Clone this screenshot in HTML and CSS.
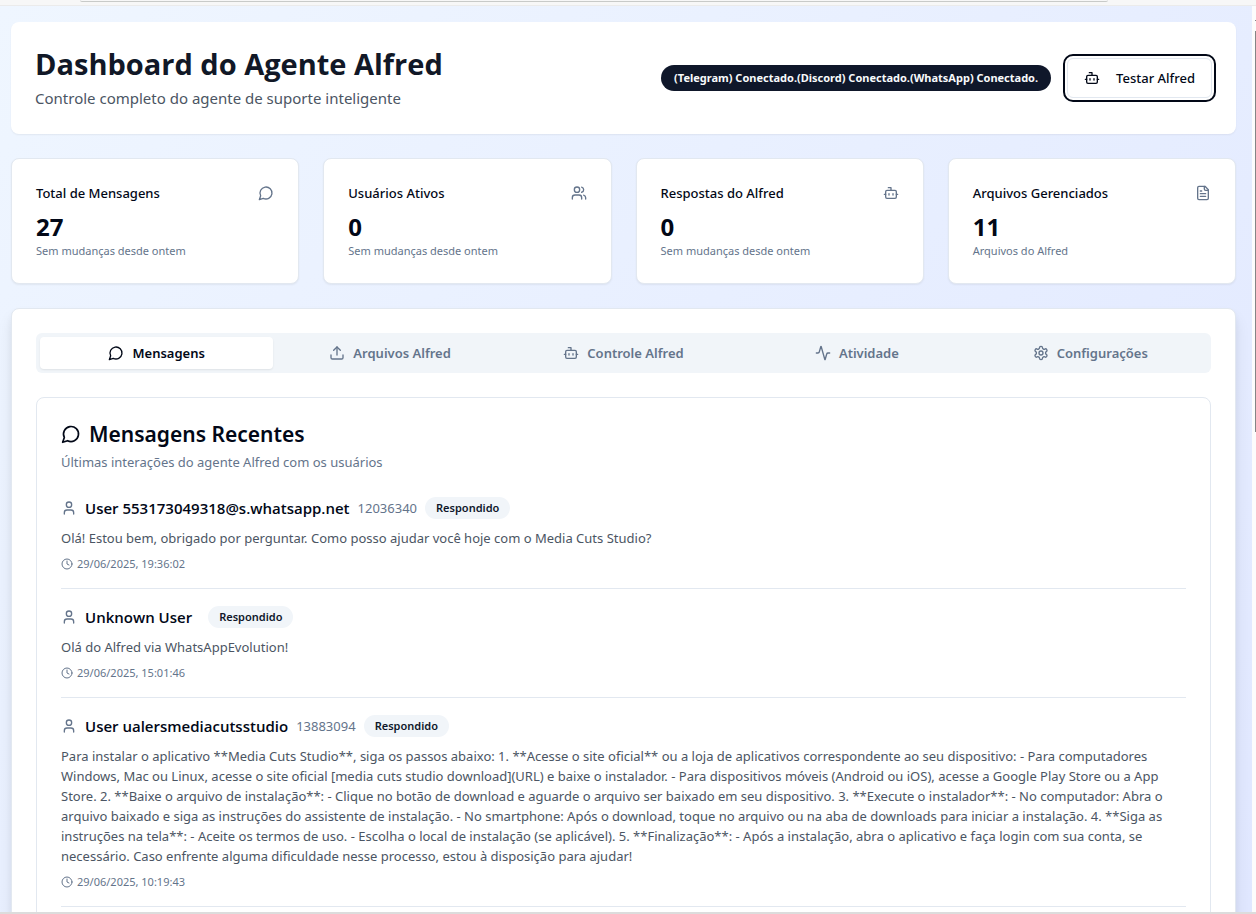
FILE: index.html
```html
<!DOCTYPE html>
<html lang="pt-BR">
<head>
<meta charset="utf-8">
<title>Dashboard do Agente Alfred</title>
<link rel="stylesheet" href="styles.css">
</head>
<body>
<svg class="sprite" aria-hidden="true">
  <symbol id="message" viewBox="0 0 24 24"><path d="M7.9 20A9 9 0 1 0 4 16.1L2 22Z"/></symbol>
  <symbol id="users" viewBox="0 0 24 24"><path d="M16 21v-2a4 4 0 0 0-4-4H6a4 4 0 0 0-4 4v2"/><circle cx="9" cy="7" r="4"/><path d="M22 21v-2a4 4 0 0 0-3-3.87"/><path d="M16 3.13a4 4 0 0 1 0 7.75"/></symbol>
  <symbol id="bot" viewBox="0 0 24 24"><path d="M12 8V4H8"/><rect width="16" height="12" x="4" y="8" rx="2"/><path d="M2 14h2"/><path d="M20 14h2"/><path d="M15 13v2"/><path d="M9 13v2"/></symbol>
  <symbol id="file" viewBox="0 0 24 24"><path d="M15 2H6a2 2 0 0 0-2 2v16a2 2 0 0 0 2 2h12a2 2 0 0 0 2-2V7Z"/><path d="M14 2v4a2 2 0 0 0 2 2h4"/><path d="M10 9H8"/><path d="M16 13H8"/><path d="M16 17H8"/></symbol>
  <symbol id="upload" viewBox="0 0 24 24"><path d="M21 15v4a2 2 0 0 1-2 2H5a2 2 0 0 1-2-2v-4"/><path d="m17 8-5-5-5 5"/><path d="M12 3v12"/></symbol>
  <symbol id="activity" viewBox="0 0 24 24"><path d="M22 12h-2.48a2 2 0 0 0-1.93 1.46l-2.35 8.36a.25.25 0 0 1-.48 0L9.24 2.18a.25.25 0 0 0-.48 0l-2.35 8.36A2 2 0 0 1 4.49 12H2"/></symbol>
  <symbol id="settings" viewBox="0 0 24 24"><path d="M12.22 2h-.44a2 2 0 0 0-2 2v.18a2 2 0 0 1-1 1.73l-.43.25a2 2 0 0 1-2 0l-.15-.08a2 2 0 0 0-2.73.73l-.22.38a2 2 0 0 0 .73 2.73l.15.1a2 2 0 0 1 1 1.72v.51a2 2 0 0 1-1 1.74l-.15.09a2 2 0 0 0-.73 2.73l.22.38a2 2 0 0 0 2.73.73l.15-.08a2 2 0 0 1 2 0l.43.25a2 2 0 0 1 1 1.73V20a2 2 0 0 0 2 2h.44a2 2 0 0 0 2-2v-.18a2 2 0 0 1 1-1.73l.43-.25a2 2 0 0 1 2 0l.15.08a2 2 0 0 0 2.73-.73l.22-.39a2 2 0 0 0-.73-2.73l-.15-.08a2 2 0 0 1-1-1.74v-.5a2 2 0 0 1 1-1.74l.15-.09a2 2 0 0 0 .73-2.73l-.22-.38a2 2 0 0 0-2.73-.73l-.15.08a2 2 0 0 1-2 0l-.43-.25a2 2 0 0 1-1-1.73V4a2 2 0 0 0-2-2z"/><circle cx="12" cy="12" r="3"/></symbol>
  <symbol id="user" viewBox="0 0 24 24"><path d="M19 21v-2a4 4 0 0 0-4-4H9a4 4 0 0 0-4 4v2"/><circle cx="12" cy="7" r="4"/></symbol>
  <symbol id="clock" viewBox="0 0 24 24"><circle cx="12" cy="12" r="10"/><path d="M12 6v6l4 2"/></symbol>
</svg>

<div class="toolbar"><div class="address-bar"></div></div>
<div class="viewport">
  <main class="page">
    <header class="card header">
      <div>
        <h1 class="title">Dashboard do Agente Alfred</h1>
        <p class="subtitle">Controle completo do agente de suporte inteligente</p>
      </div>
      <div class="header-actions">
        <span class="status">(Telegram) Conectado.(Discord) Conectado.(WhatsApp) Conectado.</span>
        <button class="test-button" type="button"><svg class="icon"><use href="#bot"/></svg>Testar Alfred</button>
      </div>
    </header>

    <section class="stats">
      <article class="card stat">
        <div class="stat-head"><h2 class="stat-title">Total de Mensagens</h2><svg class="icon muted"><use href="#message"/></svg></div>
        <p class="stat-value">27</p>
        <p class="stat-note">Sem mudanças desde ontem</p>
      </article>
      <article class="card stat">
        <div class="stat-head"><h2 class="stat-title">Usuários Ativos</h2><svg class="icon muted"><use href="#users"/></svg></div>
        <p class="stat-value">0</p>
        <p class="stat-note">Sem mudanças desde ontem</p>
      </article>
      <article class="card stat">
        <div class="stat-head"><h2 class="stat-title">Respostas do Alfred</h2><svg class="icon muted"><use href="#bot"/></svg></div>
        <p class="stat-value">0</p>
        <p class="stat-note">Sem mudanças desde ontem</p>
      </article>
      <article class="card stat">
        <div class="stat-head"><h2 class="stat-title">Arquivos Gerenciados</h2><svg class="icon muted"><use href="#file"/></svg></div>
        <p class="stat-value">11</p>
        <p class="stat-note">Arquivos do Alfred</p>
      </article>
    </section>

    <section class="card main-card">
      <div class="tabs" role="tablist">
        <button class="tab active" type="button" role="tab" aria-selected="true"><svg class="icon"><use href="#message"/></svg>Mensagens</button>
        <button class="tab" type="button" role="tab" aria-selected="false"><svg class="icon"><use href="#upload"/></svg>Arquivos Alfred</button>
        <button class="tab" type="button" role="tab" aria-selected="false"><svg class="icon"><use href="#bot"/></svg>Controle Alfred</button>
        <button class="tab" type="button" role="tab" aria-selected="false"><svg class="icon"><use href="#activity"/></svg>Atividade</button>
        <button class="tab" type="button" role="tab" aria-selected="false"><svg class="icon"><use href="#settings"/></svg>Configurações</button>
      </div>

      <div class="panel" role="tabpanel">
        <h2 class="panel-title"><svg class="icon large"><use href="#message"/></svg>Mensagens Recentes</h2>
        <p class="panel-note">Últimas interações do agente Alfred com os usuários</p>

        <div class="messages">
          <article class="message">
            <div class="message-head"><svg class="icon muted"><use href="#user"/></svg><h3 class="sender">User 553173049318@s.whatsapp.net</h3><span class="sender-id">12036340</span><span class="badge">Respondido</span></div>
            <p class="message-text">Olá! Estou bem, obrigado por perguntar. Como posso ajudar você hoje com o Media Cuts Studio?</p>
            <p class="time"><svg class="icon small"><use href="#clock"/></svg>29/06/2025, 19:36:02</p>
          </article>
          <article class="message">
            <div class="message-head"><svg class="icon muted"><use href="#user"/></svg><h3 class="sender">Unknown User</h3><span class="sender-id"></span><span class="badge">Respondido</span></div>
            <p class="message-text">Olá do Alfred via WhatsAppEvolution!</p>
            <p class="time"><svg class="icon small"><use href="#clock"/></svg>29/06/2025, 15:01:46</p>
          </article>
          <article class="message">
            <div class="message-head"><svg class="icon muted"><use href="#user"/></svg><h3 class="sender">User ualersmediacutsstudio</h3><span class="sender-id">13883094</span><span class="badge">Respondido</span></div>
            <p class="message-text">Para instalar o aplicativo **Media Cuts Studio**, siga os passos abaixo: 1. **Acesse o site oficial** ou a loja de aplicativos correspondente ao seu dispositivo: - Para computadores Windows, Mac ou Linux, acesse o site oficial [media cuts studio download](URL) e baixe o instalador. - Para dispositivos móveis (Android ou iOS), acesse a Google Play Store ou a App Store. 2. **Baixe o arquivo de instalação**: - Clique no botão de download e aguarde o arquivo ser baixado em seu dispositivo. 3. **Execute o instalador**: - No computador: Abra o arquivo baixado e siga as instruções do assistente de instalação. - No smartphone: Após o download, toque no arquivo ou na aba de downloads para iniciar a instalação. 4. **Siga as instruções na tela**: - Aceite os termos de uso. - Escolha o local de instalação (se aplicável). 5. **Finalização**: - Após a instalação, abra o aplicativo e faça login com sua conta, se necessário. Caso enfrente alguma dificuldade nesse processo, estou à disposição para ajudar!</p>
            <p class="time"><svg class="icon small"><use href="#clock"/></svg>29/06/2025, 10:19:43</p>
          </article>
        </div>
      </div>
    </section>
  </main>
  <div class="scrollbar"><div class="scroll-arrow"></div><div class="scroll-thumb"></div></div>
</div>
</body>
</html>
```
FILE: styles.css
```css
* { box-sizing: border-box; margin: 0; padding: 0; }

body {
  display: flex;
  flex-direction: column;
  height: 100vh;
  overflow: hidden;
  font-family: "Noto Sans", "Open Sans", sans-serif;
  font-size: 13px;
  line-height: 20px;
  color: #020817;
  background: #f7f7f7;
}

button { font: inherit; color: inherit; }

.sprite { position: absolute; width: 0; height: 0; }

.icon {
  flex: none;
  width: 16px;
  height: 16px;
  fill: none;
  stroke: currentColor;
  stroke-width: 2;
  stroke-linecap: round;
  stroke-linejoin: round;
}
.icon.muted { color: #64748b; }
.icon.large { width: 20px; height: 20px; }
.icon.small { width: 12px; height: 12px; }

.toolbar {
  flex: none;
  height: 6px;
  padding: 0 148px 0 80px;
  border-bottom: 1px solid #ebebeb;
}
.address-bar {
  height: 2px;
  border-bottom: 1px solid #c8cac8;
  border-radius: 0 0 8px 8px;
}

.viewport {
  flex: 1;
  display: flex;
  min-height: 0;
  border-bottom: 2px solid #dcdcdc;
}

.page {
  flex: 1;
  min-width: 0;
  overflow: hidden;
  display: flex;
  flex-direction: column;
  gap: 24px;
  padding: 16px 16px 0 11px;
  background: linear-gradient(135deg, #eff6ff, #e0e7ff);
}

.scrollbar {
  flex: none;
  display: flex;
  flex-direction: column;
  align-items: flex-end;
  gap: 10px;
  width: 4px;
  padding-top: 14px;
  background: #fcfcfc;
}
.scroll-arrow { width: 1px; height: 1px; background: #858585; }
.scroll-thumb { width: 1px; height: 45%; background: #858585; }

.card {
  flex: none;
  background: #ffffff;
  border: 1px solid #e2e8f0;
  border-radius: 8px;
  box-shadow: 0 1px 2px rgba(0, 0, 0, 0.06);
}

.header {
  display: flex;
  align-items: center;
  justify-content: space-between;
  padding: 24px;
  border: 0;
}
.title {
  font-family: "Open Sans", "Noto Sans", sans-serif;
  font-size: 29px;
  line-height: 36px;
  font-weight: 700;
  color: #111827;
}
.subtitle { margin-top: 4px; font-size: 15px; line-height: 24px; color: #4b5563; }
.header-actions { display: flex; align-items: center; gap: 16px; }
.status {
  padding: 5px 13px;
  border-radius: 13px;
  font-size: 11px;
  line-height: 16px;
  font-weight: 700;
  color: #f8fafc;
  background: #0f172a;
}
.test-button {
  display: flex;
  align-items: center;
  gap: 16px;
  height: 40px;
  padding: 0 16px;
  border: 1px solid #e2e8f0;
  border-radius: 6px;
  background: #ffffff;
  font-weight: 500;
  outline: 2px solid #020817;
  outline-offset: 2px;
}

.stats { flex: none; display: grid; grid-template-columns: repeat(4, 1fr); gap: 24px; }
.stat { padding: 24px; }
.stat-head { display: flex; align-items: center; justify-content: space-between; margin-bottom: 8px; }
.stat-title { font-size: 13px; line-height: 20px; font-weight: 500; }
.stat-value { font-size: 24px; line-height: 32px; font-weight: 700; }
.stat-note { font-size: 11px; line-height: 16px; color: #64748b; }

.main-card { padding: 24px; box-shadow: 0 10px 15px rgba(0, 0, 0, 0.08), 0 4px 6px rgba(0, 0, 0, 0.04); }

.tabs {
  display: grid;
  grid-template-columns: repeat(5, 1fr);
  padding: 4px;
  border-radius: 6px;
  background: #f1f5f9;
  color: #64748b;
}
.tab {
  display: flex;
  align-items: center;
  justify-content: center;
  gap: 8px;
  height: 32px;
  border: 0;
  border-radius: 4px;
  background: none;
  font-weight: 600;
}
.tab.active { background: #ffffff; color: #020817; box-shadow: 0 1px 2px rgba(0, 0, 0, 0.08); }

.panel {
  margin-top: 24px;
  padding: 24px;
  border: 1px solid #e2e8f0;
  border-radius: 8px;
}
.panel-title {
  display: flex;
  align-items: center;
  gap: 8px;
  font-size: 21px;
  line-height: 24px;
  font-weight: 600;
}
.panel-note { margin-top: 6px; color: #64748b; }

.messages { display: flex; flex-direction: column; gap: 16px; margin-top: 24px; }
.message { padding-bottom: 16px; border-bottom: 1px solid #e2e8f0; }
.message-head { display: flex; align-items: center; gap: 8px; }
.sender {
  font-family: "Open Sans", "Noto Sans", sans-serif;
  font-size: 15px;
  line-height: 24px;
  font-weight: 600;
}
.sender-id { color: #64748b; }
.badge {
  padding: 3px 11px;
  border-radius: 11px;
  font-size: 11px;
  line-height: 16px;
  font-weight: 600;
  color: #0f172a;
  background: #f1f5f9;
}
.message-text { margin-top: 8px; color: #4b5563; }
.time {
  display: flex;
  align-items: center;
  gap: 4px;
  margin-top: 8px;
  font-size: 11px;
  line-height: 16px;
  color: #64748b;
}
```
